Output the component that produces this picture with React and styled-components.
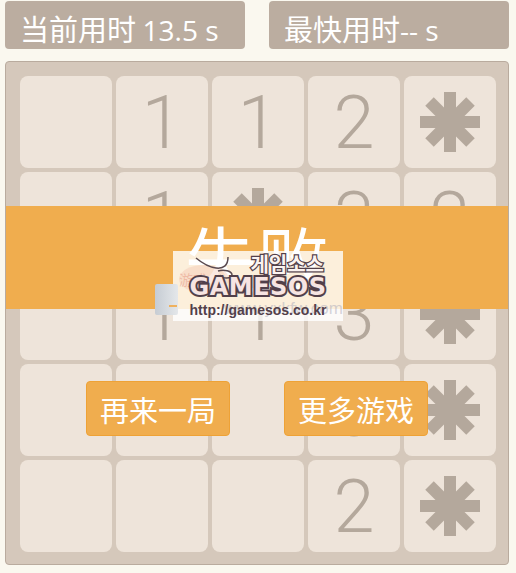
import styled, { createGlobalStyle } from "styled-components";

const GlobalStyle = createGlobalStyle`
  html, body {
    margin: 0;
    padding: 0;
    background: #faf8ef;
  }
  body {
    font-family: "Noto Sans CJK SC", sans-serif;
  }
`;

const board = [
  ["", "1", "1", "2", "*"],
  ["", "1", "*", "3", "2"],
  ["", "1", "1", "3", "*"],
  ["", "", "", "3", "*"],
  ["", "", "", "2", "*"],
];

const Star = () => (
  <StarIcon viewBox="0 0 60 60">
    <rect x="24" y="0" width="12" height="60" />
    <rect x="0" y="24" width="60" height="12" />
    <rect x="24" y="1" width="12" height="58" transform="rotate(45 30 30)" />
    <rect x="24" y="1" width="12" height="58" transform="rotate(-45 30 30)" />
  </StarIcon>
);

const Mascot = () => (
  <MascotIcon viewBox="0 0 60 30">
    <path d="M2 3 C8 8 14 12 22 13 C30 14 34 10 34 2" />
    <path d="M24 16 C30 14 38 16 38 20 C38 24 28 24 26 20" />
  </MascotIcon>
);

export default function App() {
  return (
    <Page>
      <GlobalStyle />
      <ScoreRow>
        <ScoreBox>
          当前用时 <Latin>13.5 s</Latin>
        </ScoreBox>
        <ScoreBox>
          最快用时<Latin>-- s</Latin>
        </ScoreBox>
      </ScoreRow>
      <Board>
        {board.flat().map((value, i) => (
          <Cell key={i}>{value === "*" ? <Star /> : value}</Cell>
        ))}
        <Overlay>
          <Banner>失败</Banner>
          <ButtonRow>
            <ActionButton>再来一局</ActionButton>
            <ActionButton>更多游戏</ActionButton>
          </ButtonRow>
        </Overlay>
        <Watermark>
          <Sticker>
            <StickerMark />
          </Sticker>
          <FaintBadge>游戏</FaintBadge>
          <Mascot />
          <FaintUrl>www.yxkfw.com</FaintUrl>
          <WatermarkKo>게임소스</WatermarkKo>
          <WatermarkLogo>GAMESOS</WatermarkLogo>
          <WatermarkUrl>http://gamesos.co.kr</WatermarkUrl>
        </Watermark>
      </Board>
    </Page>
  );
}

const Page = styled.div`
  width: 504px;
  padding: 1px 7px 8px 5px;
`;

const ScoreRow = styled.div`
  display: flex;
  justify-content: space-between;
  margin-bottom: 12px;
`;

const ScoreBox = styled.div`
  box-sizing: border-box;
  width: 240px;
  height: 48px;
  padding-left: 15px;
  border-radius: 4px;
  background: #bbada0;
  color: #fff;
  font-size: 29px;
  line-height: 54px;
  white-space: pre;
  overflow: hidden;
`;

const Latin = styled.span`
  font-family: "Open Sans", sans-serif;
  font-size: 28px;
  font-weight: 400;
`;

const Board = styled.div`
  position: relative;
  box-sizing: border-box;
  width: 504px;
  height: 504px;
  padding: 14px 12px 12px 14px;
  display: grid;
  grid-template-columns: repeat(5, 92px);
  grid-template-rows: repeat(5, 92px);
  gap: 4px;
  border: 1px solid #b9ab9e;
  border-radius: 4px;
  background: #d5c8bb;
  overflow: hidden;
`;

const Cell = styled.div`
  display: flex;
  align-items: center;
  justify-content: center;
  border-radius: 8px;
  background: #eee4da;
  color: #b4a89c;
  font-family: "Roboto", sans-serif;
  font-size: 74px;
  font-weight: 300;
`;

const StarIcon = styled.svg`
  width: 60px;
  height: 60px;
  fill: #b4a89c;
`;

const Overlay = styled.div`
  position: absolute;
  inset: 0;
  padding-top: 144px;
  display: flex;
  flex-direction: column;
`;

const Banner = styled.div`
  height: 103px;
  background: #f0ad4e;
  color: #fff;
  font-size: 72px;
  line-height: 100px;
  text-align: center;
`;

const ButtonRow = styled.div`
  display: flex;
  justify-content: center;
  gap: 54px;
  margin-top: 72px;
`;

const ActionButton = styled.button`
  width: 144px;
  height: 55px;
  padding: 0;
  border: 1px solid #eea236;
  border-radius: 4px;
  background: #f0ad4e;
  color: #fff;
  font-family: "Noto Sans CJK SC", sans-serif;
  font-size: 29px;
`;

const Watermark = styled.div`
  position: absolute;
  left: 167px;
  top: 189px;
  width: 170px;
  height: 70px;
  background: rgba(255, 255, 255, 0.8);
  display: flex;
  flex-direction: column;
  align-items: center;
`;

const Sticker = styled.div`
  position: absolute;
  left: -18px;
  top: 33px;
  width: 23px;
  height: 31px;
  border-radius: 2px;
  background: linear-gradient(90deg, #c6ccd3, #e4e7ea);
`;

const StickerMark = styled.div`
  position: absolute;
  right: 1px;
  bottom: 8px;
  width: 8px;
  height: 2px;
  background: #efb15e;
`;

const FaintBadge = styled.div`
  position: absolute;
  left: 6px;
  top: 14px;
  width: 50px;
  height: 28px;
  border-radius: 50%;
  background: rgba(240, 190, 170, 0.35);
  color: rgba(220, 120, 100, 0.35);
  font-size: 14px;
  line-height: 28px;
`;

const FaintUrl = styled.div`
  position: absolute;
  right: 0;
  bottom: 3px;
  font-family: "Liberation Sans", sans-serif;
  font-size: 17px;
  line-height: 18px;
  color: rgba(170, 170, 185, 0.5);
`;

const MascotIcon = styled.svg`
  position: absolute;
  left: 21px;
  top: 4px;
  width: 60px;
  height: 30px;
  fill: none;
  stroke: #5a4a50;
  stroke-width: 1.5;
`;

const WatermarkKo = styled.div`
  position: relative;
  align-self: flex-end;
  margin: 3px 19px 0 0;
  height: 20px;
  font-family: "Noto Sans CJK KR", sans-serif;
  font-size: 20px;
  font-weight: 700;
  line-height: 20px;
  color: #fbf3f0;
  -webkit-text-stroke: 2.5px #52404a;
  paint-order: stroke fill;
`;

const WatermarkLogo = styled.div`
  position: relative;
  height: 25px;
  margin-top: 1px;
  font-family: "DejaVu Sans", sans-serif;
  font-size: 24px;
  font-weight: 700;
  line-height: 25px;
  letter-spacing: 0.5px;
  color: #f6e4e2;
  -webkit-text-stroke: 4px #52404a;
  paint-order: stroke fill;
`;

const WatermarkUrl = styled.div`
  position: relative;
  margin-top: 1px;
  font-family: "Liberation Sans", sans-serif;
  font-size: 14px;
  font-weight: 700;
  line-height: 18px;
  color: #52404a;
`;
